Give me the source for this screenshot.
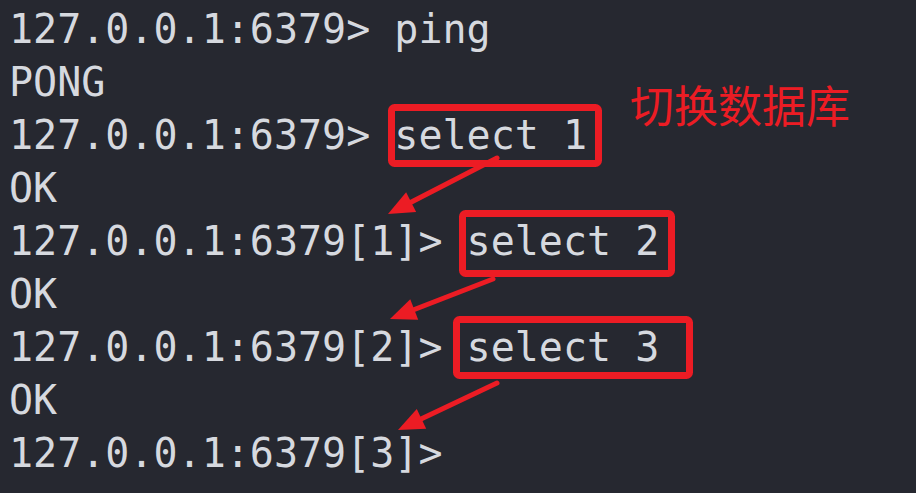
import React from "react";

const lines = [
  "127.0.0.1:6379> ping",
  "PONG",
  "127.0.0.1:6379> select 1",
  "OK",
  "127.0.0.1:6379[1]> select 2",
  "OK",
  "127.0.0.1:6379[2]> select 3",
  "OK",
  "127.0.0.1:6379[3]>",
];

const RED = "#ec1c24";

function Arrow({ x1, y1, x2, y2 }: { x1: number; y1: number; x2: number; y2: number }) {
  const dx = x2 - x1;
  const dy = y2 - y1;
  const len = Math.hypot(dx, dy);
  const ux = dx / len;
  const uy = dy / len;
  const hl = 26;
  const hw = 11;
  const bx = x2 - hl * ux;
  const by = y2 - hl * uy;
  const nx = -uy;
  const ny = ux;
  const pts = `${x2},${y2} ${bx + hw * nx},${by + hw * ny} ${bx - hw * nx},${by - hw * ny}`;
  return (
    <g>
      <line x1={x1} y1={y1} x2={bx + 4 * ux} y2={by + 4 * uy} stroke={RED} strokeWidth={5} strokeLinecap="round" />
      <polygon points={pts} fill={RED} />
    </g>
  );
}

export default function App() {
  return (
    <div className="relative w-[916px] h-[493px] overflow-hidden bg-[#262830]">
      <div
        className="pl-[9px] pt-[3px] text-[40px] leading-[53px] text-[#d6d9df] whitespace-pre"
        style={{ fontFamily: '"DejaVu Sans Mono", "Liberation Mono", monospace' }}
      >
        {lines.map((l, i) => (
          <div key={i}>{l}</div>
        ))}
      </div>
      <div
        className="absolute left-[630px] top-[82px] text-[44px] leading-[44px] text-[#ec1c24]"
        style={{ fontFamily: '"Noto Sans CJK SC", sans-serif' }}
      >
        切换数据库
      </div>
      <svg className="absolute inset-0" width={916} height={493} viewBox="0 0 916 493">
        <rect x={391.5} y={107.5} width={207} height={56} rx={3} fill="none" stroke={RED} strokeWidth={7} />
        <rect x={462.5} y={213.5} width={209} height={60} rx={3} fill="none" stroke={RED} strokeWidth={7} />
        <rect x={456.5} y={319.5} width={233} height={56} rx={3} fill="none" stroke={RED} strokeWidth={7} />
        <Arrow x1={497} y1={158} x2={388} y2={214} />
        <Arrow x1={493} y1={279} x2={390} y2={319} />
        <Arrow x1={497} y1={383} x2={398} y2={430} />
      </svg>
    </div>
  );
}
